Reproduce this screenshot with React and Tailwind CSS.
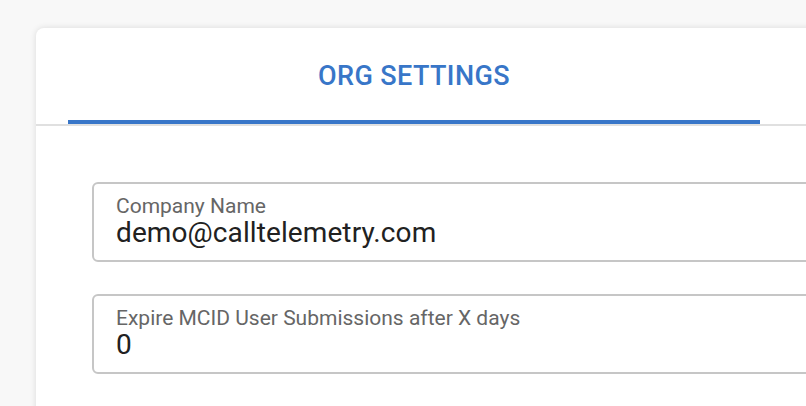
export default function App() {
  return (
    <div className="h-[406px] w-[806px] overflow-hidden bg-[#f8f8f8] font-['Roboto',sans-serif]">
      <div className="ml-[36px] mt-[28px] h-[420px] w-[800px] rounded-tl-[8px] bg-white shadow-[0_0_6px_rgba(0,0,0,0.12)]">
        <div className="flex h-[98px] border-b-2 border-[#e0e0e0]">
          <div className="relative ml-[32px] flex w-[692px] items-center justify-center">
            <span className="text-[27px] font-medium tracking-[0.4px] text-[#3876c8]">
              ORG SETTINGS
            </span>
            <div className="absolute bottom-0 left-0 right-0 h-[4px] bg-[#3876c8]" />
          </div>
        </div>
        <div className="flex flex-col gap-[32px] pl-[56px] pt-[56px]">
          <Field label="Company Name" value="demo@calltelemetry.com" />
          <Field label="Expire MCID User Submissions after X days" value="0" />
        </div>
      </div>
    </div>
  );
}

function Field({ label, value }) {
  return (
    <div className="h-[80px] w-[760px] rounded-[6px] border-2 border-[#c6c6c6] pl-[22px] pt-[11px]">
      <div className="text-[21px] leading-[22px] text-[#666666]">{label}</div>
      <div className="text-[28px] leading-[32px] tracking-[0.1px] text-[#212121]">{value}</div>
    </div>
  );
}
